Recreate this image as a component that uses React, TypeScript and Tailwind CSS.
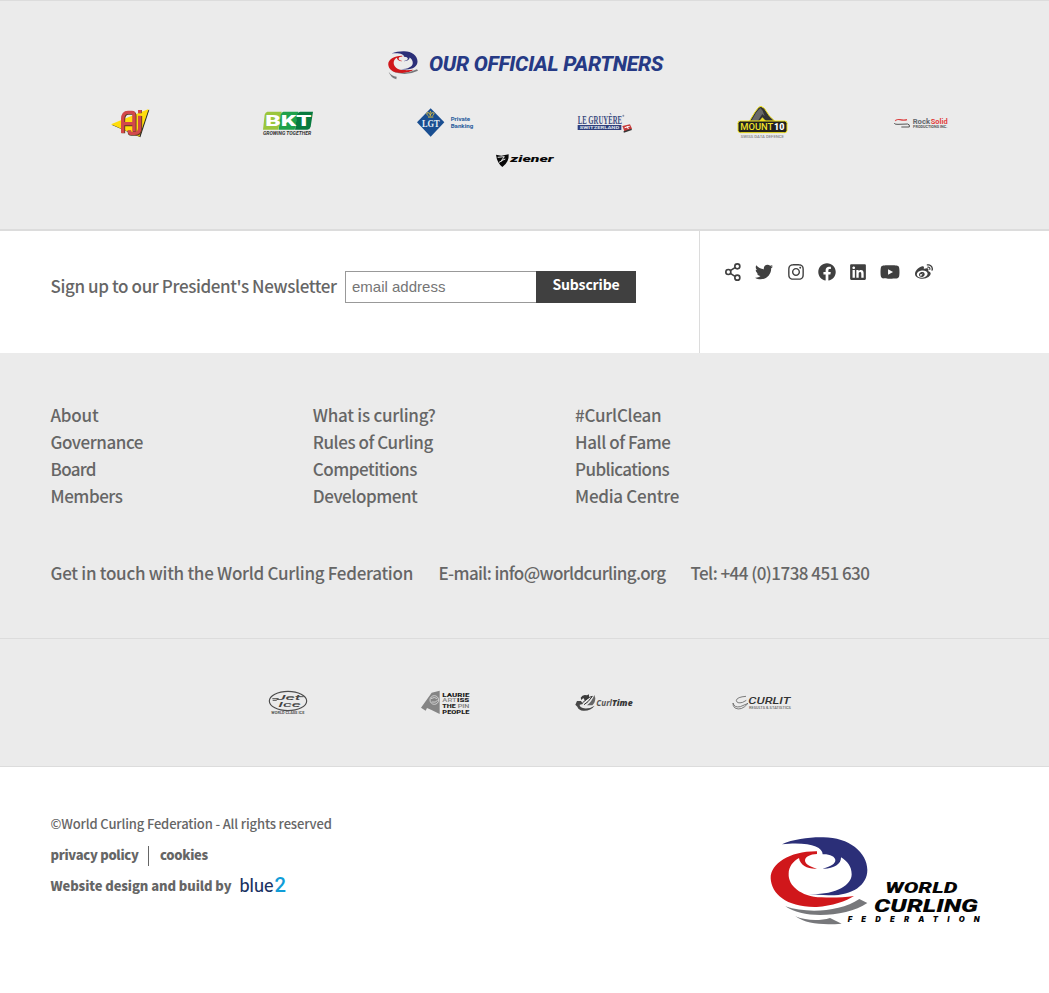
import type { ReactNode } from "react";
import { FaTwitter, FaInstagram, FaFacebook, FaLinkedin, FaYoutube, FaWeibo } from "react-icons/fa";

type WordProps = {
  x: number;
  y: number;
  w: number;
  size: number;
  fill?: string;
  weight?: number;
  italic?: boolean;
  family?: string;
  children: ReactNode;
};

/** A word inside a logo, fitted to a fixed width. */
function Word({ x, y, w, size, fill = "#333", weight = 700, italic, family = "Roboto, sans-serif", children }: WordProps) {
  return (
    <text
      x={x}
      y={y}
      textLength={w}
      lengthAdjust="spacingAndGlyphs"
      fontSize={size}
      fontWeight={weight}
      fontStyle={italic ? "italic" : "normal"}
      fontFamily={family}
      fill={fill}
    >
      {children}
    </text>
  );
}

function AjLogo() {
  return (
    <svg className="h-[34px] w-[60px]" viewBox="0 24 180 102">
      <path d="M36 81 L148 35 L121 118Z" fill="#222" />
      <path d="M33 79 L146 33 L118 116Z" fill="#ffdd0c" />
      <path
        d="M70 106V66Q70 45 86 45H97Q104 45 104 54V102M67 79H103M121 54V92Q121 108 106 108H94Q88 108 88 98M120 36V46"
        fill="none"
        stroke="#5a3a20"
        strokeWidth="11"
      />
      <path
        d="M68 105V64Q68 43 84 43H96Q102 43 102 53V100M65 77H102M119 53V90Q119 106 104 106H93Q88 106 88 97M119 36V45"
        fill="none"
        stroke="#d2484a"
        strokeWidth="10"
      />
    </svg>
  );
}

function BktLogo() {
  return (
    <svg className="h-[34px] w-[60px]" viewBox="474 24 180 102">
      <path d="M502 41H545L535 95H489L494 50Q496 42 502 41Z" fill="#9bc63c" />
      <path d="M550 41H595L584 95H536L542 50Q544 42 550 41Z" fill="#1fa14a" />
      <path d="M600 41H639L632 86Q630 94 622 95H585L591 50Q593 42 600 41Z" fill="#077a3e" />
      <Word x={496} y={84} w={138} size={46} weight={900} fill="#fff">BKT</Word>
      <Word x={489} y={110} w={144} size={14} weight={700} italic fill="#333">GROWING TOGETHER</Word>
    </svg>
  );
}

function LgtLogo() {
  return (
    <svg className="h-[34px] w-[60px]" viewBox="48 24 180 102">
      <path d="M92 31L133 73L92 116L51 73Z" fill="#194e91" />
      <path d="M84 57H100M84 53Q76 44 84 44Q91 44 91 53Q91 44 98 44Q106 44 98 53M91 39V44" fill="none" stroke="#e5c13b" strokeWidth="3" />
      <Word x={66} y={87} w={53} size={33} weight={700} fill="#e8eef5" family="Liberation Serif, serif">LGT</Word>
      <Word x={152} y={70} w={58} size={18} fill="#285b9b">Private</Word>
      <Word x={152} y={91} w={68} size={18} fill="#285b9b">Banking</Word>
    </svg>
  );
}

function GruyereLogo() {
  return (
    <svg className="h-[34px] w-[60px]" viewBox="522 24 180 102">
      <Word x={533} y={77} w={133} size={39} weight={700} fill="#3a4a80" family="Liberation Serif, serif">LE GRUYÈRE</Word>
      <rect x={533} y={81} width={131} height={15} fill="#303f7c" />
      <Word x={539} y={93} w={119} size={13} fill="#dfe3ec">SWITZERLAND</Word>
      <circle cx={670} cy={53} r={3} fill="#8790a8" />
      <path d="M667 84L690 79L696 92L674 102Z" fill="#c73a3a" />
      <path d="M674 89L689 85M681 84L685 93" stroke="#fff" strokeWidth="3" />
      <path d="M671 102L695 94" stroke="#333" strokeWidth="4" />
    </svg>
  );
}

function MountLogo() {
  return (
    <svg className="h-[34px] w-[60px]" viewBox="36 24 180 102">
      <path d="M88 70L105 42L116 28L123 25L133 31L149 55L165 70Z" fill="#333" stroke="#f3e31d" strokeWidth="3" />
      <path d="M94 69L109 43L121 30L128 38L134 55L127 48L113 70Z" fill="#686868" />
      <path d="M118 69L127 58L138 69Z" fill="#eadb29" />
      <rect x={54} y={69} width={147} height={35} rx={7} fill="#202020" stroke="#f3e31d" strokeWidth="3" />
      <Word x={61} y={96} w={99} size={27} weight={500} fill="#efe12d">MOUNT</Word>
      <Word x={162} y={96} w={31} size={27} weight={900} fill="#fff">10</Word>
      <Word x={62} y={119} w={130} size={11} fill="#858585" weight={500}>SWISS DATA DEFENCE</Word>
    </svg>
  );
}

function RockSolidLogo() {
  return (
    <svg className="h-[34px] w-[60px]" viewBox="510 24 180 102">
      <path d="M526 69Q528 63 540 65Q552 68 561 65" fill="none" stroke="#dc4444" strokeWidth="3.5" />
      <path d="M523 75Q523 80 534 79L563 78Q570 79 568 87H544" fill="none" stroke="#555" strokeWidth="3" />
      <Word x={578} y={79} w={52} size={24} fill="#62676c">Rock</Word>
      <Word x={632} y={79} w={51} size={24} fill="#e23e3c">Solid</Word>
      <Word x={579} y={91} w={103} size={10} fill="#555">PRODUCTIONS INC.</Word>
    </svg>
  );
}

function ZienerLogo() {
  return (
    <svg className="h-[34px] w-[60px]" viewBox="285 135 180 102">
      <path d="M288 170L304 173L326 169Q328 193 307 207Q291 194 288 170Z" fill="#080808" />
      <path d="M293 178L313 176L304 188L316 183M297 193L307 188" fill="none" stroke="#ebebeb" strokeWidth="3" />
      <Word x={331} y={192} w={130} size={28} weight={900} italic fill="#080808">ziener</Word>
    </svg>
  );
}

function JetIceLogo() {
  return (
    <svg className="h-[35px] w-[60px]" viewBox="9 15 180 105">
      <ellipse cx={99} cy={63} rx={56} ry={29} fill="none" stroke="#4d4d4d" strokeWidth="3.5" />
      <Word x={63} y={60} w={74} size={24} italic weight={500} fill="#444">Jet</Word>
      <Word x={70} y={82} w={67} size={24} italic weight={500} fill="#444">Ice</Word>
      <path d="M52 56H70L64 61H53M128 50H146" fill="none" stroke="#555" strokeWidth="3" />
      <Word x={49} y={102} w={99} size={9} fill="#555">WORLD CLASS ICE</Word>
    </svg>
  );
}

function LaurieLogo() {
  return (
    <svg className="h-[35px] w-[60px]" viewBox="483 15 180 105">
      <path d="M530 38L554 32V102L528 89L516 84L512 92L498 83Z" fill="#858585" />
      <circle cx={538} cy={60} r={13} fill="#858585" stroke="#ddd" strokeWidth="2.5" />
      <path d="M528 56Q538 49 547 56M530 66Q542 69 548 61" fill="none" stroke="#ddd" strokeWidth="2.5" />
      <Word x={562} y={51} w={81} size={17} weight={900} fill="#222">LAURIE</Word>
      <Word x={562} y={67} w={43} size={16} weight={500} fill="#888">ART</Word>
      <Word x={606} y={67} w={37} size={16} weight={900} fill="#222">ISS</Word>
      <Word x={562} y={84} w={40} size={17} weight={900} fill="#222">THE</Word>
      <Word x={608} y={84} w={35} size={17} weight={500} fill="#777">PIN</Word>
      <Word x={562} y={102} w={81} size={17} weight={900} fill="#222">PEOPLE</Word>
    </svg>
  );
}

function CurlTimeLogo() {
  return (
    <svg className="h-[35px] w-[60px]" viewBox="27 15 180 105">
      <path d="M47 53Q53 42 66 46L72 43L72 55L60 62L55 54L49 60Z" fill="#3c3c3c" />
      <path d="M88 45L91 54Q91 68 82 76L66 76Q80 66 88 45Z" fill="#666" />
      <path d="M48 63H36L31 74L37 80Q41 91 55 92Q77 93 89 77Q74 87 57 85Q44 82 44 74L54 72Z" fill="#484848" />
      <path d="M52 69L70 53L82 49L69 65L57 74" fill="none" stroke="#333" strokeWidth="3" />
      <Word x={94} y={77} w={47} size={25} italic weight={700} fill="#555" family="Open Sans, sans-serif">Curl</Word>
      <Word x={141} y={77} w={62} size={25} italic weight={800} fill="#383838" family="Open Sans, sans-serif">Time</Word>
    </svg>
  );
}

function CurlitLogo() {
  return (
    <svg className="h-[35px] w-[60px]" viewBox="501 15 180 105">
      <path d="M543 49Q516 51 514 61Q515 72 533 67L544 61M504 69Q508 84 526 80L549 70Q529 94 510 84Q503 78 504 69Z" fill="none" stroke="#646464" strokeWidth="2.5" />
      <Word x={550} y={71} w={126} size={27} italic weight={500} fill="#333">CURLIT</Word>
      <Word x={552} y={86} w={126} size={11} weight={500} fill="#666">RESULTS &amp; STATISTICS</Word>
    </svg>
  );
}

function Swirl() {
  return (
    <>
      <path fill="#2b2f78" d="M66 58C100 42 150 36 190 37C267 37 322 83 322 135C322 182 275 213 205 211L146 208C228 210 275 181 275 148C275 125 262 108 243 97C244 118 220 132 188 131C215 125 226 115 226 106C226 95 209 87 188 88C188 65 145 50 66 58Z" />
      <path fill="#d0171b" d="M171 79C90 78 32 115 32 160C34 207 80 248 170 246C215 243 260 228 282 213C250 217 220 219 185 217C120 215 84 180 86 146C86 125 100 108 117 99C120 121 145 133 171 131C145 125 135 115 135 106C136 95 150 88 171 87Z" />
    </>
  );
}

function FederationLogo() {
  return (
    <svg className="h-[88px] w-[212px]" viewBox="30 36 636 264" role="img" aria-label="World Curling Federation">
      <Swirl />
      <path fill="#77787b" d="M76 244C140 266 240 261 298 222L322 234C260 276 130 284 76 244ZM106 274C140 288 180 288 210 279L245 296C190 300 140 298 106 274Z" />
      <Word x={376} y={203} w={216} size={46} weight={900} italic fill="#050505">WORLD</Word>
      <Word x={342} y={260} w={312} size={54} weight={900} italic fill="#050505">CURLING</Word>
      <text x={263} y={292} textLength={396} lengthAdjust="spacing" fontSize={23} fontWeight={900} fontStyle="italic" fontFamily="Inter, sans-serif" fill="#050505">
        FEDERATION
      </text>
    </svg>
  );
}

function SmallSwirl() {
  return (
    <svg className="h-[29px] w-[31px] shrink-0" viewBox="53 32 93 87">
      <g transform="translate(44 21.5) scale(0.303 0.312)">
        <Swirl />
      </g>
      <path fill="#77787b" d="M63 92Q102 106 140 87L143 91Q104 110 63 92ZM55 94Q64 108 79 109L78 117Q61 112 55 94Z" />
    </svg>
  );
}

function ShareIcon() {
  return (
    <svg className="h-[18px] w-4" viewBox="75 114 48 54" fill="none" stroke="#404040" strokeWidth="5">
      <circle cx={85} cy={141} r={7.5} />
      <circle cx={112} cy={124} r={7.5} />
      <circle cx={112} cy={158} r={7.5} />
      <path d="M91 137L105 128M91 145L105 154" />
    </svg>
  );
}

const columns = [
  [
    ["About", "tracking-[-0.2px]"],
    ["Governance", "tracking-[-0.45px]"],
    ["Board", "tracking-[-0.7px]"],
    ["Members", "tracking-[-0.45px]"],
  ],
  [
    ["What is curling?", "tracking-[-0.26px]"],
    ["Rules of Curling", "tracking-[-0.45px]"],
    ["Competitions", "tracking-[-0.5px]"],
    ["Development", "tracking-[-0.45px]"],
  ],
  [
    ["#CurlClean", "tracking-[-0.25px]"],
    ["Hall of Fame", "tracking-[-0.45px]"],
    ["Publications", "tracking-[-0.6px]"],
    ["Media Centre", "tracking-[-0.28px]"],
  ],
];

export default function App() {
  return (
    <div className="h-[993px] w-[1049px] overflow-hidden bg-white font-['Noto_Sans_CJK_SC',sans-serif] font-medium text-[#666]">
      <section className="h-[231px] border-t border-b-2 border-[#dcdcdc] bg-[#ebebeb] pt-[50px]">
        <div className="flex h-[29px] items-center pl-[388px]">
          <SmallSwirl />
          <h2 className="-mt-[2px] ml-[10px] font-['Roboto',sans-serif] text-[21px] leading-[29px] font-extrabold tracking-[-0.28px] whitespace-nowrap text-[#263a85] italic">
            OUR OFFICIAL PARTNERS
          </h2>
        </div>
        <div className="mt-[26px] grid grid-cols-[repeat(6,158px)] justify-items-center pl-[51px]">
          <AjLogo />
          <BktLogo />
          <LgtLogo />
          <GruyereLogo />
          <MountLogo />
          <RockSolidLogo />
        </div>
        <div className="mt-[3px] pl-[495px]">
          <ZienerLogo />
        </div>
      </section>

      <section className="flex h-[122px]">
        <div className="flex w-[700px] items-start border-r border-[#dcdcdc] pt-10 pl-[50.5px]">
          <label className="w-[294.5px] text-[17px] leading-[29px] tracking-[-0.38px] whitespace-nowrap">
            Sign up to our President&apos;s Newsletter
          </label>
          <input
            className="h-8 w-[191px] border border-r-0 border-[#999] bg-white px-1.5 pb-0.5 font-['Liberation_Sans',sans-serif] text-[15px] font-normal placeholder:text-[#757575]"
            placeholder="email address"
          />
          <button className="h-8 w-[100px] bg-[#404040] pb-1.5 text-[14px] leading-[26px] font-bold tracking-[-0.15px] text-white">
            Subscribe
          </button>
        </div>
        <div className="mt-8 flex h-[18px] items-center pl-[25px] text-[#404040]">
          <ShareIcon />
          <FaTwitter className="ml-[14px] h-[18px] w-[18px]" />
          <FaInstagram className="ml-[14px] h-[18px] w-[18px]" />
          <FaFacebook className="ml-[13px] h-[18px] w-[18px]" />
          <FaLinkedin className="ml-[13px] h-[18px] w-[18px]" />
          <FaYoutube className="ml-[12.5px] h-[20px] w-[20px]" />
          <FaWeibo className="ml-[15.5px] h-[18px] w-[18px]" />
        </div>
      </section>

      <section className="h-[286px] border-b border-[#dcdcdc] bg-[#ebebeb] pt-12 pl-[50.5px] text-[17px] leading-[27px] whitespace-nowrap">
        <div className="grid grid-cols-[repeat(3,262.3px)]">
          {columns.map((items, i) => (
            <ul key={i}>
              {items.map(([label, tracking]) => (
                <li key={label}>
                  <a className={tracking}>{label}</a>
                </li>
              ))}
            </ul>
          ))}
        </div>
        <div className="mt-[50px] flex">
          <span className="w-[388px] tracking-[-0.28px]">Get in touch with the World Curling Federation</span>
          <span className="w-[252px] tracking-[-0.62px]">E-mail: info@worldcurling.org</span>
          <span className="tracking-[-0.54px]">Tel: +44 (0)1738 451 630</span>
        </div>
      </section>

      <section className="h-32 border-b border-[#dcdcdc] bg-[#ebebeb] pt-[46px]">
        <div className="grid grid-cols-[repeat(4,158px)] justify-items-center pl-[209px]">
          <JetIceLogo />
          <LaurieLogo />
          <CurlTimeLogo />
          <CurlitLogo />
        </div>
      </section>

      <footer className="flex pl-[50.5px] text-[13px] leading-[31px]">
        <div className="w-[719.5px] pt-[41px] whitespace-nowrap">
          <p className="tracking-[-0.15px]">©World Curling Federation - All rights reserved</p>
          <p className="flex items-center font-black">
            <a className="w-[88px] tracking-[-0.3px]">privacy policy</a>
            <span className="mt-[3px] mr-[11px] ml-[9.5px] h-5 w-px bg-[#666]" />
            <a className="tracking-[-0.3px]">cookies</a>
          </p>
          <p className="flex items-center font-black">
            <span className="w-[188.5px] tracking-[-0.09px]">Website design and build by</span>
            <svg className="h-[30px] w-[50px] overflow-visible" viewBox="0 0 50 30" aria-label="blue2">
              <text x="0.5" y="21" textLength="34" lengthAdjust="spacingAndGlyphs" fontFamily="Lato, sans-serif" fontSize="20" fontWeight="500" fill="#1b3263">
                blue
              </text>
              <text x="35.5" y="21" textLength="11.5" lengthAdjust="spacingAndGlyphs" fontFamily="Roboto, sans-serif" fontSize="20" fontWeight="500" fill="#109dd8">
                2
              </text>
            </svg>
          </p>
        </div>
        <div className="pt-[70px]">
          <FederationLogo />
        </div>
      </footer>
    </div>
  );
}
